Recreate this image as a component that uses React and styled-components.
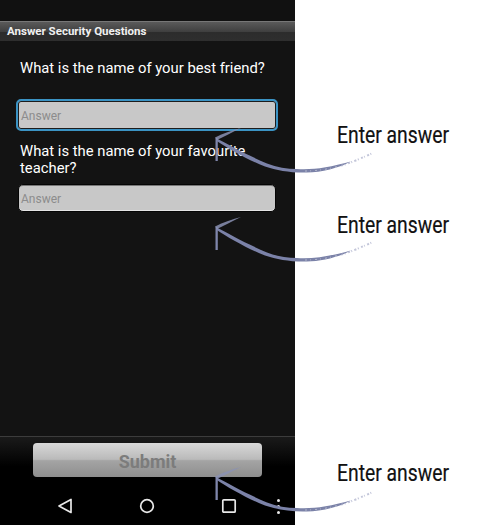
import React from "react";
import styled, { createGlobalStyle } from "styled-components";

const Global = createGlobalStyle`
  html, body {
    margin: 0;
    padding: 0;
    background: #fff;
  }
`;

const Page = styled.div`
  position: relative;
  width: 489px;
  height: 525px;
  overflow: hidden;
  font-family: Roboto, "Liberation Sans", sans-serif;
`;

const Phone = styled.div`
  display: flex;
  flex-direction: column;
  width: 295px;
  height: 525px;
  background: #131313;
`;

const StatusBar = styled.div`
  height: 21px;
  background: #111;
`;

const TitleBar = styled.div`
  height: 20px;
  padding-left: 7px;
  border-top: 1px solid #777;
  box-sizing: border-box;
  background: linear-gradient(#5a5a5a, #404040 50%, #2c2c2c 55%, #2e2e2e);
  color: #f0f0f0;
  font-size: 11.5px;
  font-weight: 700;
  line-height: 19px;
`;

const Content = styled.div`
  flex: 1;
  padding: 19px 19px 0 18px;
`;

const Question = styled.div`
  margin: ${(p) => p.$margin};
  color: #fff;
  font-size: 14.8px;
  line-height: 17px;
`;

const Field = styled.div`
  display: flex;
  align-items: center;
  box-sizing: border-box;
  height: ${(p) => (p.$focused ? "32px" : "28px")};
  margin-left: ${(p) => (p.$focused ? "-2px" : "0")};
  width: ${(p) => (p.$focused ? "262px" : "258px")};
  padding: 1px 0 0 ${(p) => (p.$focused ? "3px" : "2px")};
  border: ${(p) => (p.$focused ? "2px solid #3b93c4" : "1px solid #050505")};
  border-radius: 5px;
  background: #c8c8c8;
  box-shadow: ${(p) =>
    p.$focused
      ? "inset 0 0 0 1px #1c1c1c"
      : "inset 0 -1px 0 #e4e4e4, inset 0 1px 0 #777"};
  color: #8c8c8c;
  font-size: 12px;
`;

const Footer = styled.div`
  display: flex;
  justify-content: center;
  height: 50px;
  padding-top: 6px;
  box-sizing: border-box;
  border-top: 1px solid #3c3c3c;
  background: linear-gradient(#1a1a1a, #000 60%);
`;

const SubmitButton = styled.div`
  display: flex;
  align-items: center;
  justify-content: center;
  box-sizing: border-box;
  width: 229px;
  height: 34px;
  padding-top: 2px;
  border-radius: 4px;
  background: linear-gradient(#d8d8d8, #bababa 48%, #a4a4a4 52%, #8e8e8e);
  color: #7c7c7c;
  font-size: 18px;
  font-weight: 700;
`;

const NavBar = styled.div`
  position: relative;
  display: flex;
  align-items: center;
  justify-content: space-between;
  height: 39px;
  padding: 0 58px 0 57px;
  box-sizing: border-box;
  background: #000;
`;

const NavIcon = styled.svg`
  display: block;
  width: 16px;
  height: 16px;
  fill: none;
  stroke: #e8e8e8;
  stroke-width: 1.7;
`;

const MoreDots = styled.div`
  position: absolute;
  top: 13px;
  left: 277px;
  width: 3px;
  height: 3px;
  border-radius: 50%;
  background: #e8e8e8;
  box-shadow: 0 6px 0 #e8e8e8, 0 12px 0 #e8e8e8;
`;

const Annotation = styled.div`
  position: absolute;
  top: ${(p) => p.$top}px;
  left: 205px;
  width: 284px;
  height: 60px;
`;

const ArrowSvg = styled.svg`
  position: absolute;
  top: 0;
  left: 0;
  width: 175px;
  height: 60px;
  overflow: visible;
`;

// no condensed family is installed, so Roboto is narrowed to the same width
const Label = styled.div`
  position: absolute;
  top: ${(p) => p.$offset}px;
  left: 132px;
  color: #111;
  font-size: 23px;
  line-height: 26px;
  white-space: nowrap;
  -webkit-text-stroke: 0.2px #111;
  transform: scaleX(0.84);
  transform-origin: left center;
`;

// hand drawn arrow, coordinates relative to the annotation box
const Arrow = () => (
  <ArrowSvg viewBox="0 0 175 60">
    <path
      d="M11 10 C24 17 42 27 62 35.5 C72 39.5 82 41 92 41 C108 42 124 39.5 146 33.5 C134 40 116 44.5 102 44.5 C86 45 72 42.5 60 38.5 C42 31.5 24 21 11 12.5 Z"
      fill="#7b82a8"
    />
    <path
      d="M100 43 C112 43 124 41 134 38"
      fill="none"
      stroke="#fff"
      strokeWidth="0.7"
      strokeDasharray="2 3 1 4"
      opacity="0.6"
    />
    <path
      d="M136 37.5 C146 35 154 31 160 28.5 L168 25"
      fill="none"
      stroke="#a3a8c4"
      strokeWidth="2"
      strokeDasharray="2 1.5 1 2.5"
      opacity="0.65"
    />
    <path d="M10.5 10 L12.8 10.5 L12.8 33 L10.5 33 Z" fill="#7f86ab" />
    <path
      d="M10 9.5 C18 5.5 28 2 36 0 C28 4 19 8.5 12 12 Z"
      fill="#8b92b4"
      opacity="0.85"
    />
  </ArrowSvg>
);

const App = () => {
  return (
    <Page>
      <Global />
      <Phone>
        <StatusBar />
        <TitleBar>Answer Security Questions</TitleBar>
        <Content>
          <Question $margin="0 0 22px 2px">What is the name of your best friend?</Question>
          <Field $focused>Answer</Field>
          <Question $margin="12px 0 7px 2px">
            What is the name of your favourite
            <br />
            teacher?
          </Question>
          <Field>Answer</Field>
        </Content>
        <Footer>
          <SubmitButton>Submit</SubmitButton>
        </Footer>
        <NavBar>
          <NavIcon viewBox="0 0 16 16">
            <path d="M14 1.5 V14.5 L2 8 Z" strokeLinejoin="round" />
          </NavIcon>
          <NavIcon viewBox="0 0 16 16">
            <circle cx="8" cy="8" r="6.3" />
          </NavIcon>
          <NavIcon viewBox="0 0 16 16">
            <rect x="1.8" y="1.8" width="12.4" height="12.4" rx="1" />
          </NavIcon>
          <MoreDots />
        </NavBar>
      </Phone>
      <Annotation $top={128}>
        <Arrow />
        <Label $offset={-5}>Enter answer</Label>
      </Annotation>
      <Annotation $top={217}>
        <Arrow />
        <Label $offset={-4}>Enter answer</Label>
      </Annotation>
      <Annotation $top={467}>
        <Arrow />
        <Label $offset={-6}>Enter answer</Label>
      </Annotation>
    </Page>
  );
};

export default App;
